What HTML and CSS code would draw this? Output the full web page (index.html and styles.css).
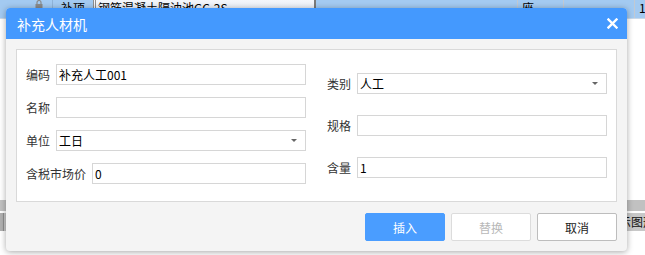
FILE: index.html
```html
<!DOCTYPE html>
<html lang="zh">
<head>
<meta charset="utf-8">
<title>补充人材机</title>
<link rel="stylesheet" href="styles.css">
</head>
<body>
<div class="sheet">
  <div class="row-top">
    <div class="c c0"><svg class="lock" width="8" height="10" viewBox="0 0 8 10"><path d="M2 4V2.5a2 2 0 0 1 4 0V4" fill="none" stroke="#8a8a8a" stroke-width="1.2"/><rect x="0.5" y="4" width="7" height="5.5" fill="#8a8a8a"/></svg></div>
    <div class="c c1">补项</div>
    <div class="c c2">钢筋混凝土隔油池GC-2S</div>
    <div class="c c3"></div>
    <div class="c c4">座</div>
    <div class="c c5"></div>
    <div class="c c6">1</div>
  </div>
  <div class="blank"></div>
  <div class="bar"></div>
  <div class="row-bottom">
    <div class="stub"></div>
    <div class="tail">示图形</div>
  </div>
</div>

<div class="dialog">
  <div class="dlg-head">
    <span class="dlg-title">补充人材机</span>
    <svg class="close" width="11" height="11" viewBox="0 0 11 11"><path d="M1.5 1.5L9.5 9.5M9.5 1.5L1.5 9.5" stroke="#fff" stroke-width="2.4" stroke-linecap="square"/></svg>
  </div>
  <div class="dlg-body">
    <div class="form-box">
      <div class="col col-left">
        <div class="field"><span class="lbl">编码</span><div class="inp">补充人工001</div></div>
        <div class="field"><span class="lbl">名称</span><div class="inp"></div></div>
        <div class="field"><span class="lbl">单位</span><div class="inp sel">工日<i class="arrow"></i></div></div>
        <div class="field"><span class="lbl">含税市场价</span><div class="inp">0</div></div>
      </div>
      <div class="col col-right">
        <div class="field"><span class="lbl">类别</span><div class="inp sel">人工<i class="arrow"></i></div></div>
        <div class="field"><span class="lbl">规格</span><div class="inp"></div></div>
        <div class="field"><span class="lbl">含量</span><div class="inp">1</div></div>
      </div>
    </div>
    <div class="actions">
      <button class="btn primary">插入</button>
      <button class="btn disabled">替换</button>
      <button class="btn">取消</button>
    </div>
  </div>
</div>
</body>
</html>
```

FILE: styles.css
```css
* { box-sizing: border-box; }
html, body {
  margin: 0;
  padding: 0;
  width: 645px;
  height: 255px;
  overflow: hidden;
  background: #fff;
  font-family: "Noto Sans CJK SC", "Noto Sans", sans-serif;
}
.sheet {
  display: flex;
  flex-direction: column;
  height: 255px;
}
.row-top {
  display: flex;
  height: 19px;
  background: #a3caf1;
  border-bottom: 1px solid #c9d9ea;
  font-size: 12px;
  line-height: 16px;
  color: #000;
}
.c { height: 18px; white-space: nowrap; overflow: hidden; }
.c0 { width: 53px; border-right: 1px solid #8fb3d8; }
.lock { margin: 0 0 0 35px; display: block; }
.c1 { width: 40px; padding-left: 8px; }
.c2 {
  width: 223px;
  padding-left: 2px;
  border-left: 3px double #8d8d8d;
  border-right: 2px solid #7a7a7a;
  background: linear-gradient(#f4f6fb, #dfe6f2);
}
.c3 { width: 202px; border-right: 1px solid #c2c9d2; }
.c4 { width: 46px; padding-left: 4px; border-right: 1px solid #c2c9d2; }
.c5 { width: 71px; border-right: 1px solid #c2c9d2; }
.c6 { flex: 1; padding-left: 4px; }
.blank { height: 181px; }
.bar { height: 11px; background: #c1c1c1; margin-bottom: 2px; }
.row-bottom {
  display: flex;
  justify-content: space-between;
  height: 18px;
  background: #c8c8c8;
}
.stub { width: 4px; background: #b0b0b0; border-right: 1px solid #8f8f8f; }
.tail {
  width: 30px;
  padding-left: 4px;
  font-size: 12px;
  line-height: 18px;
  color: #111;
  white-space: nowrap;
  overflow: hidden;
}

.dialog {
  position: absolute;
  left: 6px;
  top: 8px;
  width: 621px;
  height: 243px;
  border-radius: 4px;
  background: #f4f4f4;
  box-shadow: 0 1px 6px rgba(0, 0, 0, 0.35);
  overflow: hidden;
  display: flex;
  flex-direction: column;
}
.dlg-head {
  height: 31px;
  background: #4499fe;
  display: flex;
  align-items: center;
  justify-content: space-between;
  padding: 0 9px 0 11px;
}
.dlg-title {
  color: #fff;
  font-size: 14px;
  line-height: 20px;
}
.close { display: block; }
.dlg-body {
  flex: 1;
  padding: 10px;
  display: flex;
  flex-direction: column;
}
.form-box {
  height: 153px;
  background: #fff;
  border: 1px solid #d9d9d9;
  display: grid;
  grid-template-columns: 280px 280px;
  column-gap: 21px;
  padding: 0 9px;
}
.col { display: flex; flex-direction: column; }
.col-left { padding-top: 14px; gap: 12px; }
.col-right { padding-top: 23px; gap: 21px; }
.field { display: flex; align-items: center; height: 21px; }
.lbl {
  font-size: 12px;
  color: #333;
  margin-right: 6px;
  white-space: nowrap;
}
.inp {
  flex: 1;
  height: 21px;
  border: 1px solid #d6d6d6;
  background: #fff;
  font-size: 12px;
  line-height: 19px;
  color: #000;
  padding-left: 2px;
  position: relative;
}
.arrow {
  position: absolute;
  right: 8px;
  top: 8px;
  width: 0;
  height: 0;
  border-left: 3px solid transparent;
  border-right: 3px solid transparent;
  border-top: 3px solid #666;
}
.actions {
  margin-top: 11px;
  display: flex;
  justify-content: flex-end;
  gap: 6px;
}
.btn {
  width: 80px;
  height: 28px;
  border: 1px solid #bdbdbd;
  border-radius: 2px;
  background: #fff;
  font-family: "Noto Sans CJK SC", "Noto Sans", sans-serif;
  font-size: 12px;
  color: #222;
  padding: 0;
}
.btn.primary { background: #4a9dff; border-color: #4a9dff; color: #fff; }
.btn.disabled { border-color: #dcdcdc; color: #b8b8b8; }
```
